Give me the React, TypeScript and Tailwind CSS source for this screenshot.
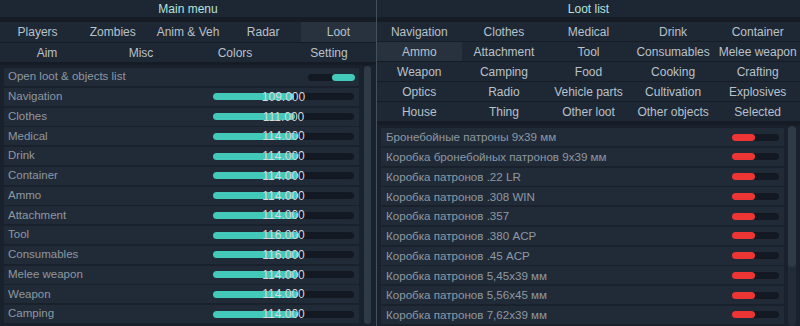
const mainTabs1 = ['Players', 'Zombies', 'Anim & Veh', 'Radar', 'Loot'];
const mainTabs2 = ['Aim', 'Misc', 'Colors', 'Setting'];

const lootTabs = [
  'Navigation', 'Clothes', 'Medical', 'Drink', 'Container',
  'Ammo', 'Attachment', 'Tool', 'Consumables', 'Melee weapon',
  'Weapon', 'Camping', 'Food', 'Cooking', 'Crafting',
  'Optics', 'Radio', 'Vehicle parts', 'Cultivation', 'Explosives',
  'House', 'Thing', 'Other loot', 'Other objects', 'Selected',
];

const distances: [string, number][] = [
  ['Navigation', 109], ['Clothes', 111], ['Medical', 114], ['Drink', 114],
  ['Container', 114], ['Ammo', 114], ['Attachment', 114], ['Tool', 116],
  ['Consumables', 116], ['Melee weapon', 114], ['Weapon', 114], ['Camping', 114],
];

const ammo = [
  'Бронебойные патроны 9x39 мм',
  'Коробка бронебойных патронов 9x39 мм',
  'Коробка патронов .22 LR',
  'Коробка патронов .308 WIN',
  'Коробка патронов .357',
  'Коробка патронов .380 ACP',
  'Коробка патронов .45 ACP',
  'Коробка патронов 5,45x39 мм',
  'Коробка патронов 5,56x45 мм',
  'Коробка патронов 7,62x39 мм',
];

function Tab({ label, active }: { label: string; active?: boolean }) {
  return (
    <div
      className={`flex items-center justify-center whitespace-nowrap text-[12px] text-[#b9c1c9] ${
        active ? 'bg-[#28323f]' : 'bg-[#1e2835]'
      }`}
    >
      {label}
    </div>
  );
}

export default function App() {
  return (
    <div className="flex w-[800px] h-[326px] overflow-hidden bg-[#151c26] font-['Liberation_Sans',Arial,sans-serif]">
      {/* Main menu */}
      <div className="flex flex-col w-[376px] shrink-0">
        <div className="h-[17px] bg-[#1d2734] flex items-center justify-center text-[12px] text-[#b4e3dd]">
          Main menu
        </div>
        <div className="mt-[5px] grid grid-cols-5 h-[20px]">
          {mainTabs1.map(t => <Tab key={t} label={t} active={t === 'Loot'} />)}
        </div>
        <div className="mt-px grid grid-cols-4 h-[19px]">
          {mainTabs2.map(t => <Tab key={t} label={t} />)}
        </div>

        <div className="flex mt-[3px] flex-1 bg-[#19212c] min-h-0">
          <div className="flex flex-col gap-[1.75px] pl-[4px] pt-[3px] w-[359px]">
            <div className="flex items-center justify-between h-[18px] bg-[#212b38] pl-[4px] pr-[4px] shrink-0">
              <span className="text-[11.5px] text-[#8e98a2]">Open loot &amp; objects list</span>
              <div className="w-[47px] h-[7px] rounded-full bg-[#121922] flex justify-end">
                <div className="w-[23px] h-[7px] rounded-full bg-[#43c9b9]" />
              </div>
            </div>
            {distances.map(([name, v]) => (
              <div key={name} className="flex items-center h-[18px] bg-[#212b38] pl-[4px] shrink-0">
                <span className="text-[11.5px] text-[#8e98a2] w-[205px]">{name}</span>
                <div className="relative w-[141px] h-[7px] rounded-full bg-[#121922]">
                  <div className="h-[7px] rounded-full bg-[#43c9b9]" style={{ width: `${(v / 190) * 141}px` }} />
                  <span className="absolute inset-0 flex items-center justify-center text-[12px] text-[#d3dadf] leading-none">
                    {v.toFixed(3)}
                  </span>
                </div>
              </div>
            ))}
          </div>
          <div className="ml-[5px] mt-[1px] w-[7px] h-[258px] rounded-full bg-[#2f3a47]" />
        </div>
      </div>

      {/* Divider */}
      <div className="w-px shrink-0 bg-[#46505c]" />

      {/* Loot list */}
      <div className="flex flex-col flex-1">
        <div className="h-[17px] bg-[#1d2734] flex items-center justify-center text-[12px] text-[#b4e3dd]">
          Loot list
        </div>
        <div className="mt-[5px] grid grid-cols-5 grid-rows-5 gap-y-px">
          {lootTabs.map(t => (
            <div key={t} className="h-[19px] grid">
              <Tab label={t} active={t === 'Ammo'} />
            </div>
          ))}
        </div>

        <div className="flex mt-[4px] flex-1 bg-[#19212c] min-h-0">
          <div className="flex flex-col gap-[1.75px] pl-[4px] pt-[3px] w-[407px]">
            {ammo.map(a => (
              <div key={a} className="flex items-center justify-between h-[18px] bg-[#212b38] pl-[5px] pr-[5px] shrink-0">
                <span className="text-[11.6px] text-[#8e98a2] whitespace-nowrap">{a}</span>
                <div className="w-[47px] h-[7px] rounded-full bg-[#121922]">
                  <div className="w-[23px] h-[7px] rounded-full bg-[#ee3535]" />
                </div>
              </div>
            ))}
          </div>
          <div className="ml-[4px] mt-[1px] w-[8px] h-[200px] rounded-full bg-[#222c38] overflow-hidden">
            <div className="h-[141px] rounded-full bg-[#2f3a47]" />
          </div>
        </div>
      </div>
    </div>
  );
}
